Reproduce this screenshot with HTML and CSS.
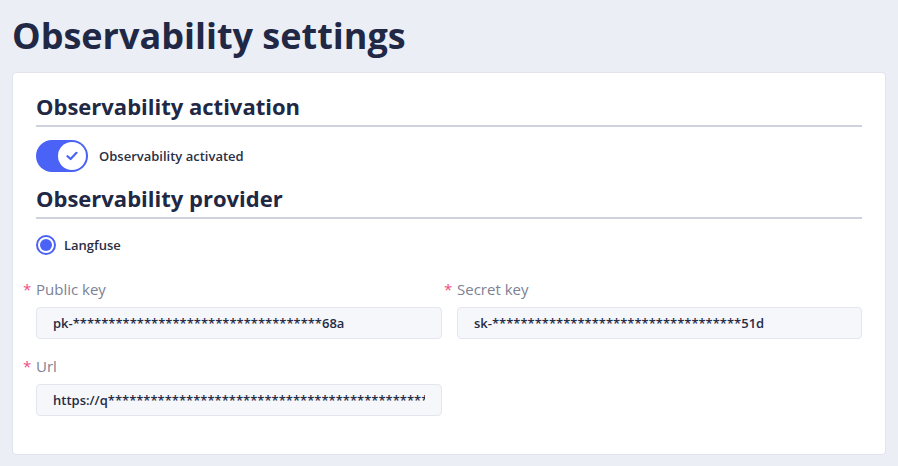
FILE: index.html
```html
<!DOCTYPE html>
<html lang="en">
<head>
<meta charset="utf-8">
<title>Observability settings</title>
<link rel="stylesheet" href="styles.css">
</head>
<body>
<div class="page">
  <h1 class="page-title">Observability settings</h1>
  <div class="card">
    <h2 class="section-title">Observability activation</h2>
    <div class="toggle-row">
      <span class="toggle">
        <span class="knob">
          <svg width="12" height="10" viewBox="0 0 12 10"><path d="M1.5 5.2 L4.6 8 L10.5 1.8" fill="none" stroke="#4a62f6" stroke-width="2.2" stroke-linecap="round" stroke-linejoin="round"/></svg>
        </span>
      </span>
      <span class="toggle-label">Observability activated</span>
    </div>
    <h2 class="section-title">Observability provider</h2>
    <div class="radio-row">
      <span class="radio"><span class="radio-dot"></span></span>
      <span class="radio-label">Langfuse</span>
    </div>
    <div class="fields">
      <div class="field">
        <label class="field-label"><span class="req">*</span>Public key</label>
        <div class="input">pk-***********************************68a</div>
      </div>
      <div class="field">
        <label class="field-label"><span class="req">*</span>Secret key</label>
        <div class="input">sk-***********************************51d</div>
      </div>
      <div class="field">
        <label class="field-label"><span class="req">*</span>Url</label>
        <div class="input"><span class="clip">https://q**************************************************</span></div>
      </div>
    </div>
  </div>
</div>
</body>
</html>
```
FILE: styles.css
```css
* { box-sizing: border-box; }
html, body { margin: 0; padding: 0; }
body {
  background: #eceef6;
  font-family: "Open Sans", "Noto Sans", sans-serif;
  color: #222842;
  width: 898px;
  height: 466px;
  overflow: hidden;
}
.page {
  padding: 12px 12px 0 12px;
}
.page-title {
  margin: 0;
  font-size: 36px;
  font-weight: 700;
  line-height: 48px;
  color: #212845;
  letter-spacing: 0;
}
.card {
  margin-top: 12px;
  width: 874px;
  height: 383px;
  background: #ffffff;
  border: 1px solid #e1e4ee;
  border-radius: 4px;
  padding: 16px 23px 0 23px;
}
.section-title {
  margin: 0;
  font-size: 22px;
  font-weight: 700;
  line-height: 34px;
  color: #212845;
  border-bottom: 2px solid #cfd2dd;
  padding-bottom: 2px;
}
.toggle-row {
  display: flex;
  align-items: center;
  gap: 11px;
  margin-top: 13px;
  margin-bottom: 9px;
}
.toggle {
  display: flex;
  align-items: center;
  justify-content: flex-end;
  width: 52px;
  height: 32px;
  border-radius: 16px;
  background: #4a62f6;
  padding: 2px;
}
.knob {
  width: 28px;
  height: 28px;
  border-radius: 50%;
  background: #ffffff;
  display: flex;
  align-items: center;
  justify-content: center;
}
.toggle-label, .radio-label {
  font-size: 13px;
  font-weight: 600;
  color: #2a2f45;
}
.radio-row {
  display: flex;
  align-items: center;
  gap: 8px;
  margin-top: 16px;
}
.radio {
  width: 20px;
  height: 20px;
  border-radius: 50%;
  border: 2px solid #4a62f6;
  display: flex;
  align-items: center;
  justify-content: center;
}
.radio-dot {
  width: 12px;
  height: 12px;
  border-radius: 50%;
  background: #4a62f6;
}
.fields {
  display: grid;
  grid-template-columns: 406px 405px;
  column-gap: 15px;
  row-gap: 16px;
  margin-top: 23px;
}
.field-label {
  display: block;
  position: relative;
  font-size: 15px;
  line-height: 22px;
  color: #7c8194;
  margin-bottom: 7px;
}
.req {
  position: absolute;
  left: -13px;
  top: 0;
  color: #ee4d80;
  font-size: 15px;
}
.input {
  height: 32px;
  background: #f6f7fb;
  border: 1px solid #e3e6ee;
  border-radius: 4px;
  padding: 0 16px;
  display: flex;
  align-items: center;
  font-size: 13px;
  font-weight: 600;
  color: #272c45;
  overflow: hidden;
  white-space: nowrap;
}
.clip {
  display: block;
  overflow: hidden;
  width: 372px;
}
```
